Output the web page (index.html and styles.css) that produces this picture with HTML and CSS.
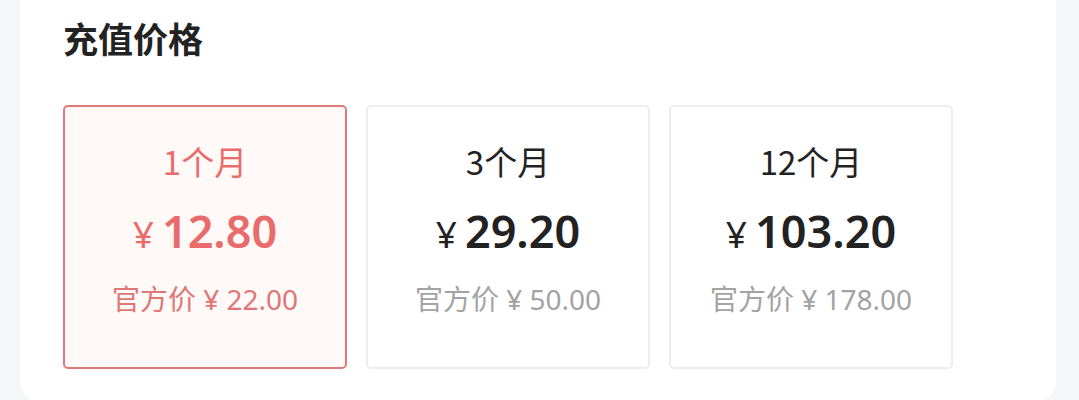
FILE: index.html
```html
<!DOCTYPE html>
<html lang="zh-CN">
<head>
<meta charset="utf-8">
<title>充值价格</title>
<link rel="stylesheet" href="styles.css">
</head>
<body>
<section class="panel">
  <h2 class="title">充值价格</h2>
  <div class="plans">
    <div class="plan active">
      <div class="plan-name">1个月</div>
      <div class="plan-price"><span class="yen">¥</span><span class="amount">12.80</span></div>
      <div class="plan-orig">官方价 ¥ 22.00</div>
    </div>
    <div class="plan">
      <div class="plan-name">3个月</div>
      <div class="plan-price"><span class="yen">¥</span><span class="amount">29.20</span></div>
      <div class="plan-orig">官方价 ¥ 50.00</div>
    </div>
    <div class="plan">
      <div class="plan-name">12个月</div>
      <div class="plan-price"><span class="yen">¥</span><span class="amount">103.20</span></div>
      <div class="plan-orig">官方价 ¥ 178.00</div>
    </div>
  </div>
</section>
</body>
</html>
```

FILE: styles.css
```css
html, body {
  margin: 0;
  padding: 0;
  background: #f5f6f8;
  font-family: "Noto Sans CJK SC", "Noto Sans", sans-serif;
}

body {
  padding: 0 23px 0 20px;
  height: 400px;
  overflow: hidden;
}

.panel {
  background: #ffffff;
  height: 402px;
  box-sizing: border-box;
  border-radius: 0 0 20px 20px;
  padding: 16px 0 0 43px;
}

.title {
  margin: 0;
  font-size: 35px;
  line-height: 44px;
  font-weight: 700;
  color: #222222;
}

.plans {
  display: flex;
  gap: 19px;
  margin-top: 45px;
}

.plan {
  width: 284px;
  height: 264px;
  box-sizing: border-box;
  border: 2px solid #ededed;
  border-radius: 5px;
  background: #ffffff;
  display: flex;
  flex-direction: column;
  align-items: center;
  padding-top: 32px;
  color: #222222;
}

.plan-name {
  font-size: 33px;
  line-height: 44px;
}

.plan-price {
  margin-top: 20px;
  height: 56px;
  display: flex;
  align-items: baseline;
  gap: 8px;
}

.yen {
  font-family: "Noto Sans", sans-serif;
  font-size: 37px;
  line-height: 56px;
}

.amount {
  font-family: "Noto Sans", sans-serif;
  font-size: 45px;
  font-weight: 600;
  line-height: 56px;
}

.plan-orig {
  margin-top: 22px;
  font-family: "Noto Sans", "Noto Sans CJK SC", sans-serif;
  font-size: 28px;
  line-height: 36px;
  color: #a3a3a3;
}

.plan.active {
  border-color: #e07a7a;
  background: #fff9f7;
  color: #ea6b6b;
}

.plan.active .plan-orig {
  color: #e07676;
}
```
